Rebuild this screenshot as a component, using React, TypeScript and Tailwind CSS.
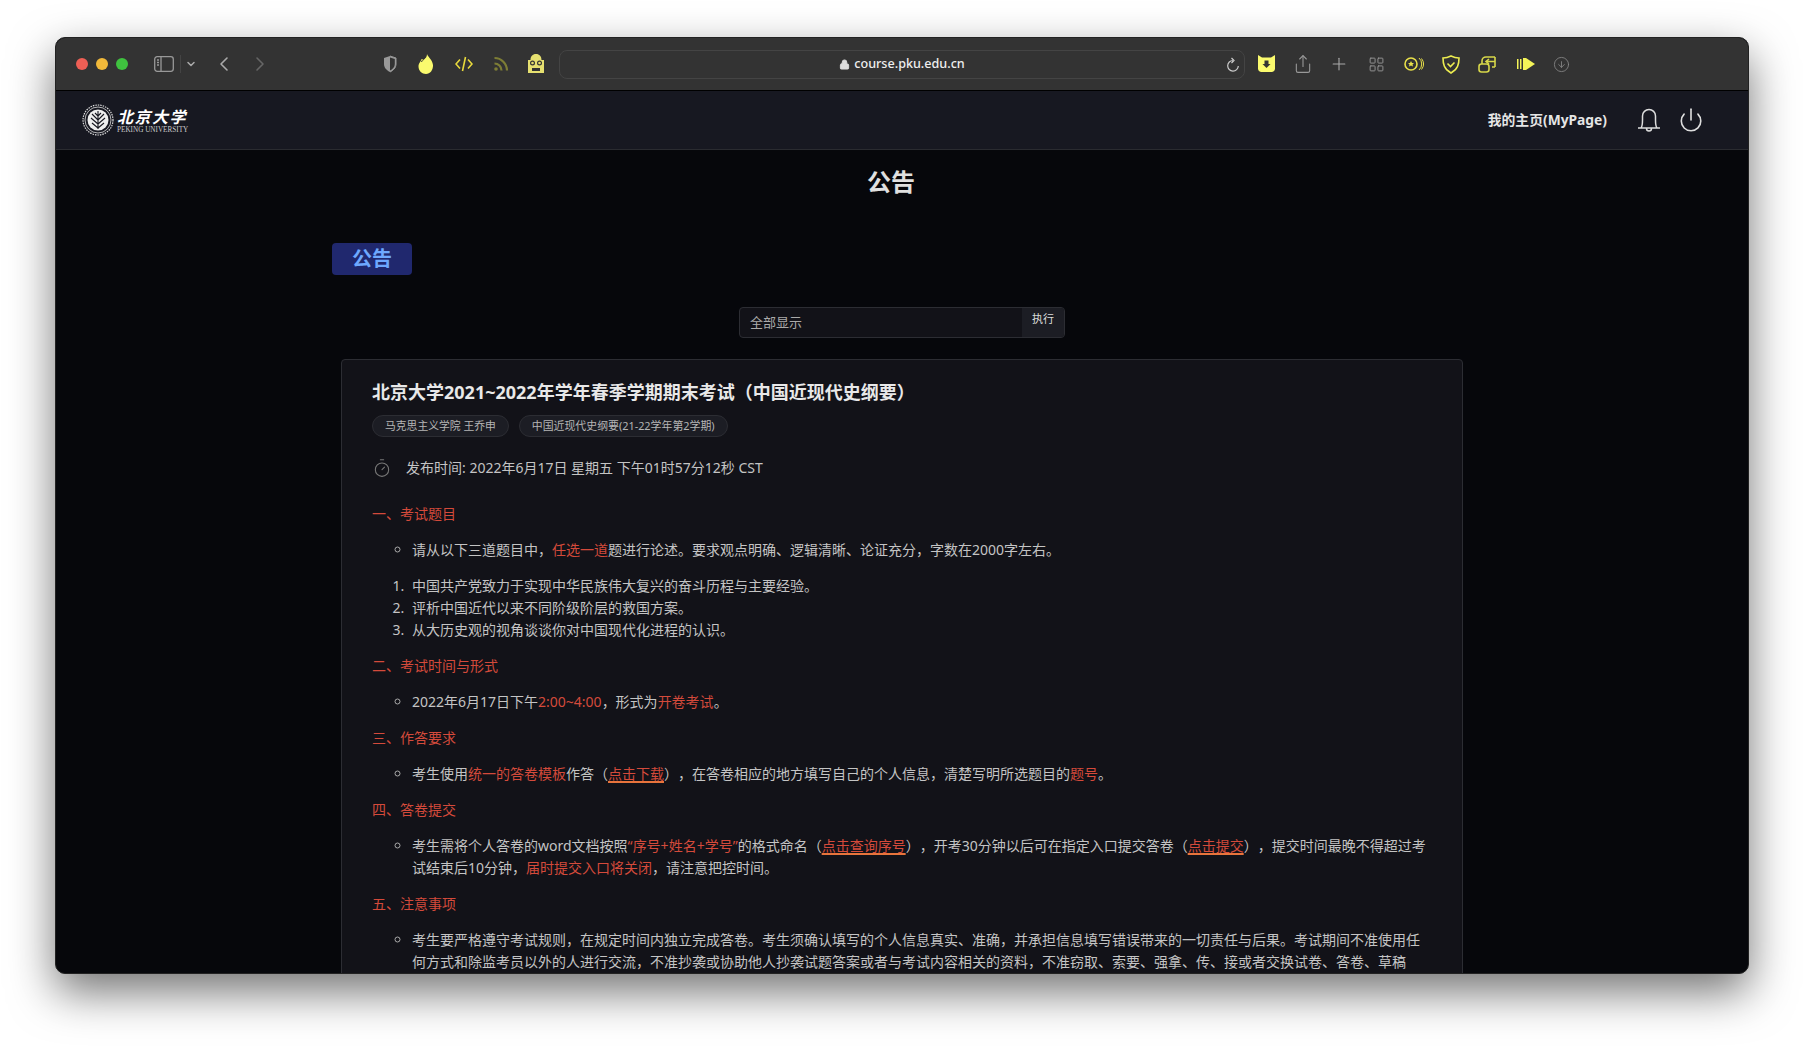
import type { ReactNode } from 'react';
import { ChevronDown, ChevronLeft, ChevronRight, Lock, Share, Plus, LayoutGrid, CircleArrowDown, Power, Timer } from 'lucide-react';

function Red({ children }: { children: ReactNode }) {
  return <span className="text-[#d44a3b]">{children}</span>;
}

function LinkText({ children }: { children: ReactNode }) {
  return <span className="text-[#d44a3b] underline decoration-[#e8743c] decoration-2 underline-offset-2">{children}</span>;
}

function Heading({ children }: { children: ReactNode }) {
  return <p className="mb-[14px] h-[22px] text-[#d44a3b]">{children}</p>;
}

function Item({ children }: { children: ReactNode }) {
  return (
    <ul className="mb-[14px] ml-[40px] list-[circle] marker:text-[#aaa]">
      <li>{children}</li>
    </ul>
  );
}

function Logo() {
  return (
    <div className="flex items-center gap-[3px]">
      <svg width="32" height="32" viewBox="0 0 32 32" fill="none">
        <circle cx="16" cy="16" r="15" stroke="#ddd" strokeWidth="1.2" strokeDasharray="1.5 1" />
        <circle cx="16" cy="16" r="13" stroke="#ddd" strokeWidth="0.8" />
        <circle cx="16" cy="16" r="10.5" fill="#eee" />
        <path d="M16 7v18M16 24l-6-5M16 24l6-5M16 20l-7-6M16 20l7-6M16 16l-6-6M16 16l6-6M16 12l-3-3M16 12l3-3" stroke="#181921" strokeWidth="1.1" />
      </svg>
      <div className="flex flex-col text-white">
        <span className="text-[16px] font-bold italic leading-[20px] tracking-[1.5px] font-['Noto_Sans_CJK_SC',sans-serif]">北京大学</span>
        <span className="text-[7.2px] leading-[9px] text-[#ccc] font-['Liberation_Serif',serif]">PEKING UNIVERSITY</span>
      </div>
    </div>
  );
}

function Toolbar() {
  return (
    <div className="flex h-[53px] shrink-0 items-center border-b border-black bg-[#333333] pl-[20px]">
      <span className="h-3 w-3 rounded-full bg-[#ee5f55]" />
      <span className="ml-2 h-3 w-3 rounded-full bg-[#f1b93a]" />
      <span className="ml-2 h-3 w-3 rounded-full bg-[#3fc23f]" />
      <svg className="ml-[26px]" width="20" height="16" viewBox="0 0 20 16" fill="none" stroke="#999" strokeWidth="1.3">
        <rect x="0.7" y="0.7" width="18.6" height="14.6" rx="2.5" />
        <path d="M7 1v14M3 4h2M3 6.5h2M3 9h2" />
      </svg>
      <span className="ml-[6px] h-[18px] w-px bg-[#444]" />
      <ChevronDown className="ml-[4px] text-[#aaa]" size={12} strokeWidth={3} />
      <ChevronLeft className="ml-[15px] text-[#aaa]" size={24} strokeWidth={1.6} />
      <ChevronRight className="ml-[12px] text-[#666]" size={24} strokeWidth={1.6} />
      {/* extension icons */}
      <svg className="ml-[111px]" width="14" height="18" viewBox="0 0 14 18">
        <path d="M7 1L1 3v6c0 4 3 6.500 6 8 3-1.500 6-4 6-8V3z" fill="#999" />
        <path d="M7 2.500L11.800 4v5c0 3.200-2.400 5.200-4.800 6.500z" fill="#333" />
        <path d="M7 1l6 2v6c0 4-3 6.500-6 8" fill="none" stroke="#999" />
      </svg>
      <svg className="ml-[21px]" width="16" height="20" viewBox="0 0 16 20">
        <path d="M9 0c1 3 5.500 6 6 11 .3 5-3 9-7 9s-7.500-3-7.500-7.500C.5 9 3 7.500 3.500 5 5.500 6.500 9 4 9 0z" fill="#fafa6e" />
        <path d="M7 2.500C6.500 5 5 7 3 7.500" fill="none" stroke="#333" strokeWidth="1" />
      </svg>
      <svg className="ml-[21px]" width="18" height="18" viewBox="0 0 18 18" fill="none" stroke="#e8d93c" strokeWidth="1.600">
        <path d="M5 4.500L1 9l4 4.500M13 4.500L17 9l-4 4.500M10.500 2L7.500 16" />
      </svg>
      <svg className="ml-[20px]" width="16" height="16" viewBox="0 0 16 16" fill="none" stroke="#7d7d35" strokeWidth="2.200">
        <path d="M1.500 7.500a7 7 0 0 1 7 7M1.500 2a12.500 12.500 0 0 1 12.500 12.500" />
        <circle cx="3" cy="13" r="1.800" fill="#7d7d35" stroke="none" />
      </svg>
      <svg className="ml-[18px]" width="18" height="20" viewBox="0 0 18 20">
        <path d="M9 0c3.500 0 5.500 2.500 5.500 6H17v13H1V6h2.500C3.500 2.500 5.500 0 9 0z" fill="#e6e070" />
        <circle cx="5.500" cy="9" r="2.500" fill="#333" />
        <circle cx="12.500" cy="9" r="2.500" fill="#333" />
        <circle cx="5.500" cy="9" r="1.300" fill="#e6e070" />
        <circle cx="12.500" cy="9" r="1.300" fill="#e6e070" />
        <rect x="5" y="14" width="8" height="3" fill="#333" />
      </svg>
      {/* address bar */}
      <div className="relative ml-[14px] flex h-[29px] w-[686px] items-center justify-center rounded-[8px] border border-[#444] bg-[#333333] pt-[1px] text-[12.6px] font-medium text-[#eeeeee]">
        <Lock className="mr-[4px] text-[#ddd]" size={11} fill="#ddd" />
        course.pku.edu.cn
        <svg className="absolute right-[4px] top-[6px]" width="14" height="16" viewBox="0 0 14 16" fill="none" stroke="#ccc" strokeWidth="1.200">
          <path d="M7 3.500A5.300 5.300 0 1 0 12.300 9M5.500 1l2.500 2.500L5.500 6" />
        </svg>
      </div>
      <svg className="ml-[13px]" width="17" height="18" viewBox="0 0 17 18">
        <path d="M0 0l4 2.500h9L17 0v13.500c0 2-1.500 3.500-3.500 3.500h-10C1.500 17 0 15.500 0 13.500z" fill="#fafa6e" />
        <path d="M6.500 5.500h4V9h2l-4 4-4-4h2z" fill="#333" />
      </svg>
      <Share className="ml-[18px] text-[#999]" size={20} strokeWidth={1.3} />
      <Plus className="ml-[16px] text-[#aaa]" size={20} strokeWidth={1.3} />
      <LayoutGrid className="ml-[19px] text-[#999]" size={17} strokeWidth={1.3} />
      <svg className="ml-[19px]" width="20" height="16" viewBox="0 0 20 16" fill="none" stroke="#e8e04a">
        <circle cx="7" cy="8" r="6" strokeWidth="1.600" />
        <path d="M7 5l1 2h2l-1.500 1.500.5 2-2-1-2 1 .5-2L4 7h2z" fill="#e8e04a" stroke="none" />
        <path d="M15 2a8 8 0 0 1 0 12M17.500 2.500a9 9 0 0 1 0 11" />
      </svg>
      <svg className="ml-[18px]" width="18" height="19" viewBox="0 0 18 19" fill="none" stroke="#ecec50" strokeWidth="1.600">
        <path d="M9 1c3 1.500 5 2 8 2 0 6-1 11-8 15C2 14 1 9 1 3c3 0 5-.5 8-2z" />
        <path d="M5.500 8.500l3 3 4-4" />
      </svg>
      <svg className="ml-[18px]" width="18" height="18" viewBox="0 0 18 18" fill="none" stroke="#d8d84a" strokeWidth="1.600">
        <rect x="1" y="9" width="10" height="8" rx="2.500" />
        <path d="M17 2H8a4 4 0 0 0-4 4v3M17 12h-3M8 6.500h9M11 4L8 6.500 11 9" />
        <path d="M17 2v10" />
      </svg>
      <svg className="ml-[21px]" width="18" height="12" viewBox="0 0 18 12" fill="#f4f458">
        <rect x="0" y="1" width="1.500" height="10" />
        <rect x="3" y="1" width="1.500" height="10" />
        <path d="M6 0h3l9 6-9 6H6z" />
      </svg>
      <CircleArrowDown className="ml-[18px] text-[#888]" size={17} strokeWidth={1.2} />
    </div>
  );
}

function Navbar() {
  return (
    <div className="flex h-[59px] shrink-0 items-center border-b border-[#2a2b30] bg-[#171821] pl-[26px] pr-[44px]">
      <Logo />
      <span className="ml-auto text-[13.8px] font-bold text-[#e5e5e5]">我的主页(MyPage)</span>
      <svg className="ml-[30px]" width="24" height="26" viewBox="0 0 24 26" fill="none" stroke="#ddd" strokeWidth="1.500">
        <path d="M1 21h22M4 21c1.500-2 1.500-4 1.500-8V9a6.500 6.500 0 0 1 13 0v4c0 4 0 6 1.500 8M9.500 21.500a2.500 2.500 0 0 0 5 0" />
      </svg>
      <Power className="ml-[17px] text-[#ddd]" size={26} strokeWidth={1.5} />
    </div>
  );
}

function Notice() {
  return (
    <div className="ml-[285px] w-[1122px] rounded-t-[4px] border border-[#2c2d33] bg-[#121218] pb-10 pl-[30px] pr-[34px] pt-[19px] text-[14px] leading-[22px] text-[#c4c4c4] [text-spacing-trim:space-all]">
      <h2 className="text-[18px] font-bold leading-[26px] text-[#e8e8e8]">北京大学2021~2022年学年春季学期期末考试（中国近现代史纲要）</h2>
      <div className="mt-[10px] flex gap-[10px]">
        <span className="flex h-[22px] items-center rounded-full border border-[#2c2d33] bg-[#1c1d24] px-[12px] text-[10.8px] text-[#b5b5b5]">马克思主义学院 王乔申</span>
        <span className="flex h-[22px] items-center rounded-full border border-[#2c2d33] bg-[#1c1d24] px-[12px] text-[10.9px] text-[#b5b5b5]">中国近现代史纲要(21-22学年第2学期)</span>
      </div>
      <div className="mb-[24px] mt-[20px] flex h-[22px] items-center gap-[14px]">
        <Timer className="text-[#777]" size={20} strokeWidth={1.3} />
        <span>发布时间: 2022年6月17日 星期五 下午01时57分12秒 CST</span>
      </div>
      <Heading>一、考试题目</Heading>
      <Item>请从以下三道题目中，<Red>任选一道</Red>题进行论述。要求观点明确、逻辑清晰、论证充分，字数在2000字左右。</Item>
      <ol className="mb-[14px] ml-[36px] list-decimal [&>li]:pl-[4px]">
        <li>中国共产党致力于实现中华民族伟大复兴的奋斗历程与主要经验。</li>
        <li>评析中国近代以来不同阶级阶层的救国方案。</li>
        <li>从大历史观的视角谈谈你对中国现代化进程的认识。</li>
      </ol>
      <Heading>二、考试时间与形式</Heading>
      <Item>2022年6月17日下午<Red>2:00~4:00</Red>，形式为<Red>开卷考试</Red>。</Item>
      <Heading>三、作答要求</Heading>
      <Item>考生使用<Red>统一的答卷模板</Red>作答（<LinkText>点击下载</LinkText>），在答卷相应的地方填写自己的个人信息，清楚写明所选题目的<Red>题号</Red>。</Item>
      <Heading>四、答卷提交</Heading>
      <Item>考生需将个人答卷的word文档按照<Red><span className="font-['Noto_Sans',sans-serif]">“</span>序号+姓名+学号<span className="font-['Noto_Sans',sans-serif]">”</span></Red>的格式命名（<LinkText>点击查询序号</LinkText>），开考30分钟以后可在指定入口提交答卷（<LinkText>点击提交</LinkText>），提交时间最晚不得超过考试结束后10分钟，<Red>届时提交入口将关闭</Red>，请注意把控时间。</Item>
      <Heading>五、注意事项</Heading>
      <Item>考生要严格遵守考试规则，在规定时间内独立完成答卷。考生须确认填写的个人信息真实、准确，并承担信息填写错误带来的一切责任与后果。考试期间不准使用任何方式和除监考员以外的人进行交流，不准抄袭或协助他人抄袭试题答案或者与考试内容相关的资料，不准窃取、索要、强拿、传、接或者交换试卷、答卷、草稿纸。</Item>
    </div>
  );
}

export default function App() {
  return (
    <div className="h-[1047px] w-[1804px] overflow-hidden bg-white px-[55px] pt-[37px] font-['Noto_Sans','Noto_Sans_CJK_SC',sans-serif]">
      <div className="flex h-[937px] flex-col overflow-hidden rounded-[10px] border border-[#222] bg-[#06070b] shadow-[0_18px_45px_rgba(0,0,0,0.55)]">
        <Toolbar />
        <Navbar />
        <main className="flex-1 overflow-hidden">
          <h1 className="mt-[15px] pr-[22px] text-center text-[24px] font-bold leading-[34px] text-[#e0e0e0]">公告</h1>
          <div className="ml-[276px] mt-[44px] flex h-[32px] w-[80px] items-center justify-center rounded-[4px] bg-[#20286e] text-[20px] font-bold text-[#6ea8fe]">公告</div>
          <div className="ml-[683px] mt-[32px] flex h-[31px] w-[326px] overflow-hidden rounded-[4px] border border-[#2c2d33] bg-[#121218]">
            <span className="flex flex-1 items-center pl-[10px] text-[13px] text-[#aaaaaa]">全部显示</span>
            <span className="w-[42px] bg-[#1c1d24] pt-[3px] text-center text-[11px] text-[#dddddd]">执行</span>
          </div>
          <div className="mt-[21px]">
            <Notice />
          </div>
        </main>
      </div>
    </div>
  );
}
